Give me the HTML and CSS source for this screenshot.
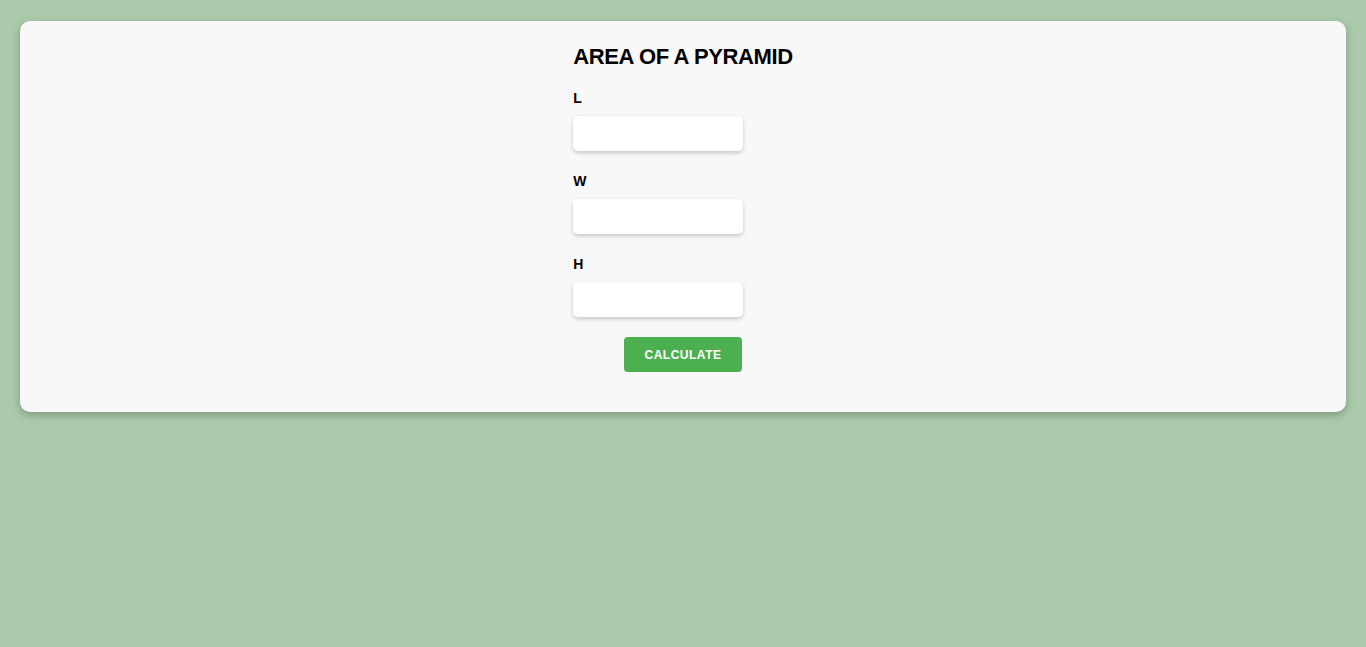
FILE: index.html
```html
<!DOCTYPE html>
<html>
<head>
<meta charset="utf-8">
<link rel="stylesheet" href="styles.css">
</head>
<body>
<main class="card">
  <form class="calc">
    <h1 class="title">AREA OF A PYRAMID</h1>
    <label class="field-label" for="l">L</label>
    <input class="field" id="l" type="text">
    <label class="field-label" for="w">W</label>
    <input class="field" id="w" type="text">
    <label class="field-label" for="h">H</label>
    <input class="field" id="h" type="text">
    <button class="btn" type="button">CALCULATE</button>
  </form>
</main>
</body>
</html>
```
FILE: styles.css
```css
html, body {
  margin: 0;
  padding: 0;
}
body {
  background: #abcaab;
  font-family: "Liberation Sans", Arial, sans-serif;
  padding: 21px 20px;
  min-height: 647px;
  box-sizing: border-box;
}
.card {
  background: #f8f8f8;
  border-radius: 10px;
  box-shadow: 0 3px 8px rgba(0, 0, 0, 0.25);
  display: flex;
  justify-content: center;
  padding: 22px 0 40px;
}
.calc {
  display: flex;
  flex-direction: column;
  align-items: flex-start;
  margin: 0;
}
.title {
  font-size: 22px;
  font-weight: bold;
  letter-spacing: -0.4px;
  margin: 0 0 19px;
  line-height: 28px;
  color: #000;
}
.field-label {
  font-size: 14px;
  font-weight: bold;
  line-height: 16px;
  margin-bottom: 10px;
}
.field {
  width: 170px;
  height: 35px;
  box-sizing: border-box;
  border: none;
  border-radius: 5px;
  background: #fff;
  box-shadow: 0 2px 4px rgba(0, 0, 0, 0.2);
  margin: 0 0 22px;
  padding: 0 8px;
}
.btn {
  align-self: center;
  width: 118px;
  height: 35px;
  margin-top: -2px;
  border: none;
  border-radius: 4px;
  background: #4caf50;
  color: #fff;
  font-family: "Liberation Sans", Arial, sans-serif;
  font-weight: bold;
  font-size: 12px;
  letter-spacing: 0.5px;
}
```
